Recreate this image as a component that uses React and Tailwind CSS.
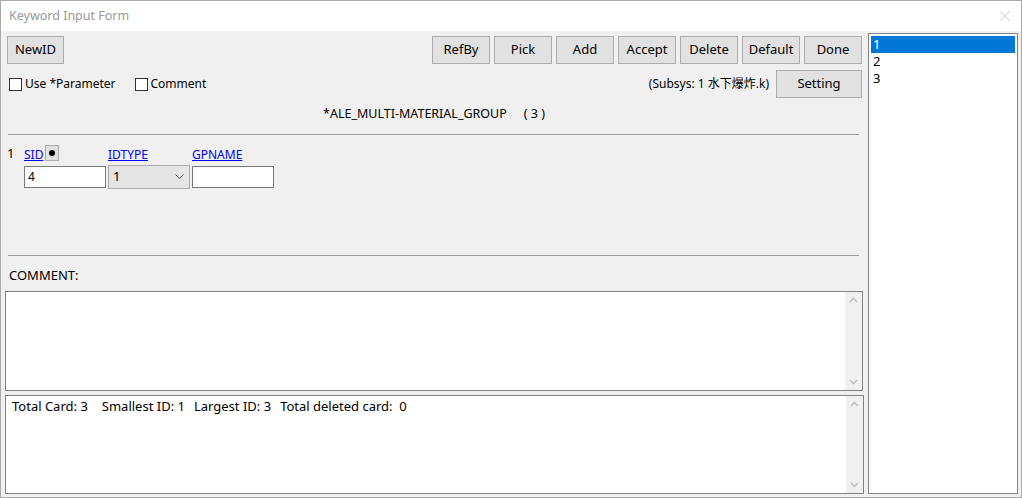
import React from "react";

const font = { fontFamily: '"Noto Sans", "Noto Sans CJK SC", sans-serif' };

function Btn({ children, className = "" }) {
  return (
    <div
      className={
        "flex h-[28px] items-center justify-center border border-[#adadad] bg-[#e1e1e1] text-[13px] text-black " +
        className
      }
    >
      {children}
    </div>
  );
}

function Chevron({ up }) {
  return (
    <svg width="9" height="6" viewBox="0 0 9 6">
      <path
        d={up ? "M1 5 L4.5 1.5 L8 5" : "M1 1 L4.5 4.5 L8 1"}
        fill="none"
        stroke="#c2c2c2"
        strokeWidth="1.6"
      />
    </svg>
  );
}

function ScrollBar() {
  return (
    <div className="flex w-[17px] flex-col items-center justify-between bg-[#f0f0f0] py-[5px]">
      <Chevron up />
      <Chevron />
    </div>
  );
}

function Checkbox({ label }) {
  return (
    <div className="flex items-center gap-[3px]">
      <div className="h-[13px] w-[13px] border border-[#333] bg-white" />
      <span className="text-[12px] text-black">{label}</span>
    </div>
  );
}

export default function App() {
  return (
    <div
      className="flex h-[498px] w-[1022px] flex-col overflow-hidden border border-[#aaaaaa] bg-[#f0f0f0]"
      style={font}
    >
      {/* title bar */}
      <div className="flex h-[30px] shrink-0 items-center justify-between bg-white pl-[8px] pr-[10px]">
        <span className="text-[12.5px] text-[#999999]">Keyword Input Form</span>
        <svg width="12" height="12" viewBox="0 0 12 12">
          <path d="M1 1 L11 11 M11 1 L1 11" stroke="#dcdcdc" strokeWidth="1.2" />
        </svg>
      </div>

      {/* body */}
      <div className="flex min-h-0 flex-1">
        {/* left */}
        <div className="flex w-[866px] flex-col">
          {/* row1 */}
          <div className="mt-[5px] flex h-[28px] shrink-0 items-center pl-[6px] pr-[5px]">
            <Btn className="w-[57px]">NewID</Btn>
            <div className="ml-auto flex gap-[4px]">
              {["RefBy", "Pick", "Add", "Accept", "Delete", "Default", "Done"].map((b) => (
                <Btn key={b} className="w-[58px]">
                  {b}
                </Btn>
              ))}
            </div>
          </div>
          {/* row2 */}
          <div className="mt-[6px] flex h-[28px] shrink-0 items-center pl-[8px] pr-[5px]">
            <Checkbox label="Use *Parameter" />
            <div className="ml-[19px]">
              <Checkbox label="Comment" />
            </div>
            <span className="ml-auto mr-[7px] text-[12px] text-black">(Subsys: 1 水下爆炸.k)</span>
            <Btn className="w-[86px]">Setting</Btn>
          </div>
          {/* keyword title */}
          <div className="mt-[2px] flex h-[28px] shrink-0 items-center justify-center text-[12.5px] text-black">
            <span>*ALE_MULTI-MATERIAL_GROUP</span>
            <span className="ml-[17px]">( 3 )</span>
          </div>
          {/* line */}
          <div className="ml-[7px] mt-[6px] h-px w-[851px] shrink-0 bg-[#a0a0a0]" />
          {/* fields */}
          <div className="flex shrink-0 pl-[6px] pt-[10px]">
            <div className="w-[17px] text-[13px] leading-[17px] text-black">1</div>
            <div className="flex flex-col">
              <div className="flex h-[16px] items-end">
                <span className="text-[12px] leading-none text-[#0000ff] underline">SID</span>
                <div className="ml-[2px] flex h-[16px] w-[14px] items-center justify-center border border-[#adadad] bg-[#e1e1e1]">
                  <div className="h-[6px] w-[6px] rounded-full bg-black" />
                </div>
              </div>
              <div className="mt-[5px] flex h-[22px] w-[82px] items-center border border-[#7a7a7a] bg-white pl-[3px] text-[12px] text-black">
                4
              </div>
            </div>
            <div className="ml-[2px] flex flex-col">
              <div className="flex h-[16px] items-end">
                <span className="text-[12px] leading-none text-[#0000ff] underline">IDTYPE</span>
              </div>
              <div className="mt-[4px] flex h-[24px] w-[82px] items-center justify-between border border-[#adadad] bg-[#e5e5e5] pl-[4px] pr-[5px] text-[13px] text-black">
                <span>1</span>
                <svg width="9" height="6" viewBox="0 0 9 6">
                  <path d="M0.5 0.5 L4.5 4.5 L8.5 0.5" fill="none" stroke="#555" strokeWidth="1" />
                </svg>
              </div>
            </div>
            <div className="ml-[2px] flex flex-col">
              <div className="flex h-[16px] items-end">
                <span className="text-[12px] leading-none text-[#0000ff] underline">GPNAME</span>
              </div>
              <div className="mt-[5px] h-[22px] w-[82px] border border-[#7a7a7a] bg-white" />
            </div>
          </div>
          {/* line 2 */}
          <div className="ml-[7px] mt-[66px] h-px w-[851px] shrink-0 bg-[#a0a0a0]" />
          <div className="mt-[11px] shrink-0 pl-[8px] text-[13px] leading-[16px] text-black">COMMENT:</div>
          {/* comment textarea */}
          <div className="ml-[4px] mt-[8px] flex h-[100px] w-[858px] shrink-0 border border-[#828282] bg-white">
            <div className="flex-1" />
            <ScrollBar />
          </div>
          {/* status box */}
          <div className="ml-[4px] mt-[4px] flex h-[99px] w-[859px] shrink-0 border border-[#828282] bg-white">
            <div className="flex-1 pl-[6px] pt-[1px] text-[13px] text-black">
              <span>Total Card: 3</span>
              <span className="ml-[14px]">Smallest ID: 1</span>
              <span className="ml-[9px]">Largest ID: 3</span>
              <span className="ml-[9px]">Total deleted card:&nbsp;&nbsp;0</span>
            </div>
            <ScrollBar />
          </div>
        </div>

        {/* right list */}
        <div className="ml-[1px] mt-[2px] h-[461px] w-[150px] border border-[#828282] bg-white p-[2px] text-[13px] leading-[17px] text-black">
          <div className="bg-[#0078d7] pl-[2px] text-white">1</div>
          <div className="pl-[2px]">2</div>
          <div className="pl-[2px]">3</div>
        </div>
      </div>
    </div>
  );
}
